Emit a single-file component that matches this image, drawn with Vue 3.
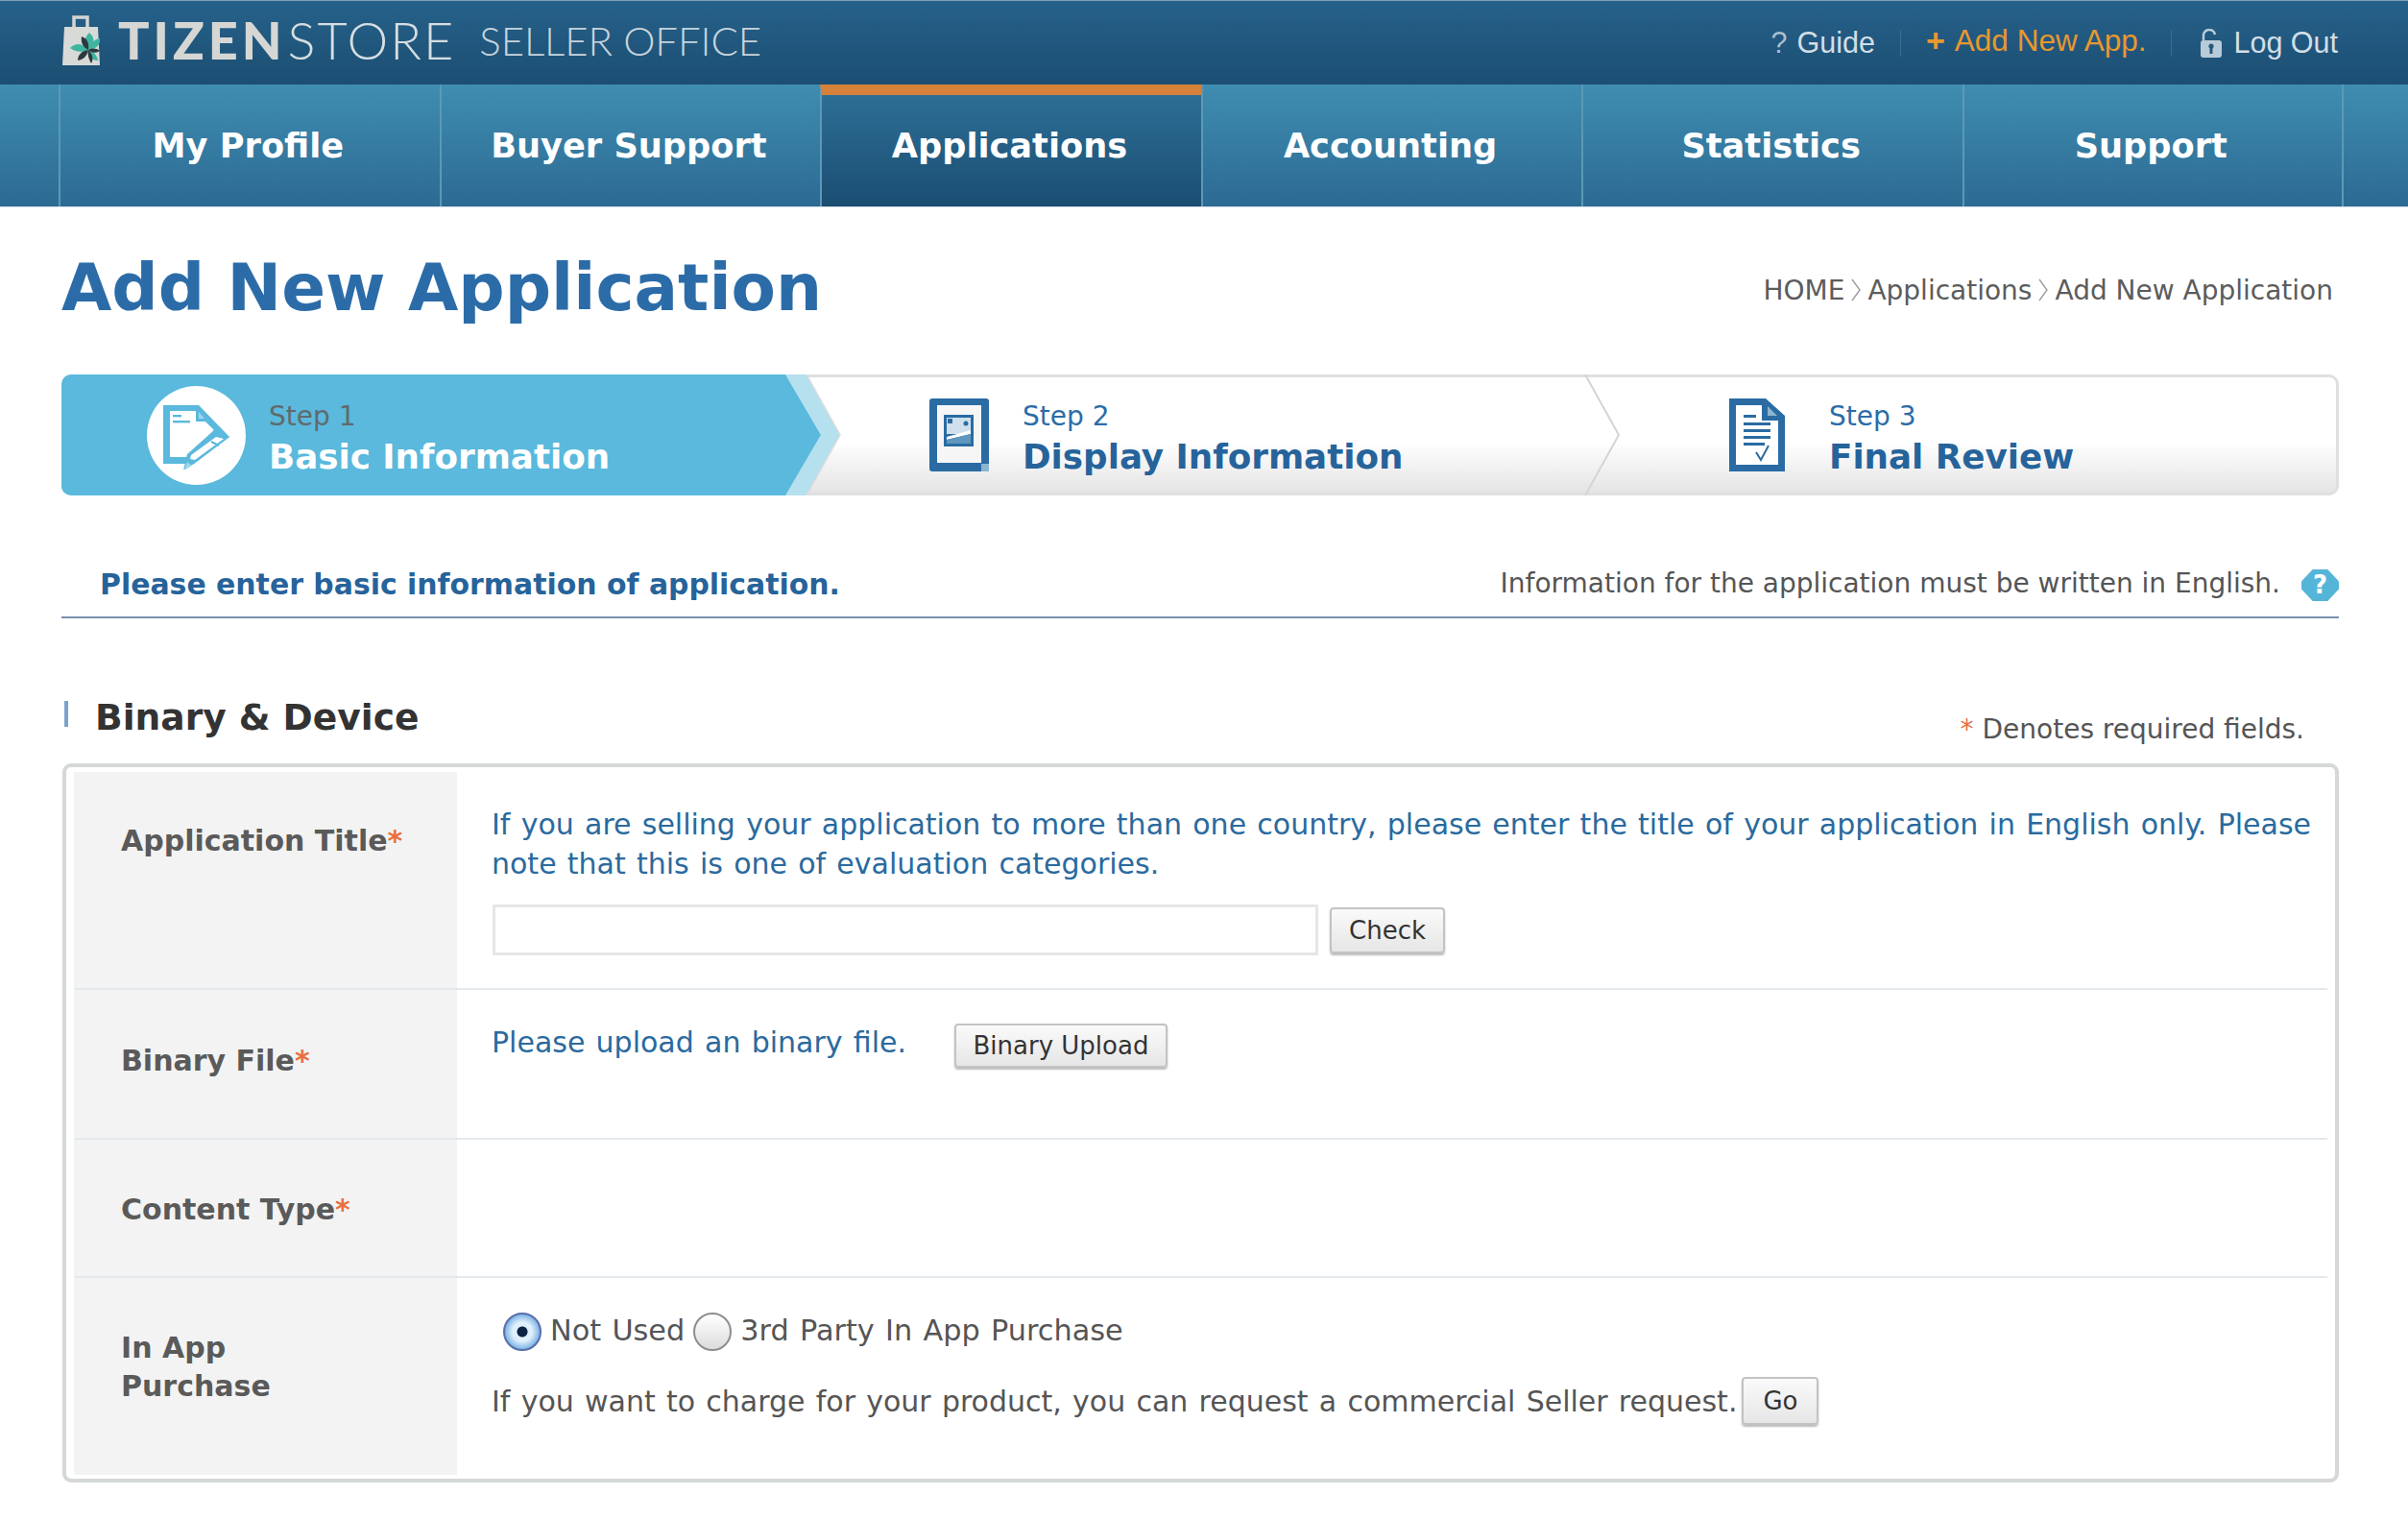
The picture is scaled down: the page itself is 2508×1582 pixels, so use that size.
<template>
  <div class="page">
    <header class="topbar">
      <div class="logo">
        <svg class="logo-icon" viewBox="0 0 40 52" width="40" height="52">
          <path d="M12 13V2h14v11" fill="none" stroke="#d3d5d3" stroke-width="3.5" />
          <path d="M2 12h35l2 40H0z" fill="#d8dad8" />
          <path d="M27 36c-5-6-5-12 1-18 6 5 6 12-1 18z" fill="#3fb5a0" />
          <path d="M27 36c-7 3-14 2-19-2 6-6 13-5 19 2z" fill="#3fb5a0" />
          <path d="M27 36c2-7 6-11 12-12 1 7-4 11-12 12z" fill="#3fb5a0" />
          <path d="M27 36c-6-3-8-8-7-14 6 2 8 7 7 14z" fill="#2c3a40" />
          <path d="M27 36c-1 6-5 10-11 11 0-6 4-10 11-11z" fill="#2c3a40" />
          <path d="M27 36c5 1 9 5 10 11-6 0-10-4-10-11z" fill="#3fb5a0" />
          <path d="M27 36c4-2 8-2 12 1-4 3-9 2-12-1z" fill="#2c3a40" />
          <path d="M27 36c-1 4 0 9 3 14 3-5 1-10-3-14z" fill="#2c3a40" />
        </svg>
        <span class="logo-tizen">TIZEN</span>
        <span class="logo-store">STORE</span>
        <span class="logo-office">SELLER OFFICE</span>
      </div>
      <div class="top-links">
        <a class="top-link"><span class="q">?</span> Guide</a>
        <i class="top-sep"></i>
        <a class="top-link add"><b>+</b> Add New App.</a>
        <i class="top-sep"></i>
        <a class="top-link">
          <svg viewBox="0 0 28 30" width="28" height="30">
            <path d="M7 13V8a6 6 0 0 1 12-2" fill="none" stroke="#b9cbd8" stroke-width="2.5" />
            <rect x="4" y="12" width="22" height="18" rx="3" fill="#b9cbd8" />
            <rect x="13.5" y="18" width="3" height="8" fill="#24597d" />
            <circle cx="15" cy="18" r="2.6" fill="#24597d" />
          </svg>
          Log Out
        </a>
      </div>
    </header>

    <nav class="nav">
      <a v-for="item in navItems" :key="item" class="nav-item" :class="{ active: item === 'Applications' }">{{ item }}</a>
    </nav>

    <main class="content">
      <div class="title-row">
        <h1>Add New Application</h1>
        <div class="crumbs">
          <span>HOME</span>
          <svg viewBox="0 0 10 24" width="10" height="24"><path d="M1 1l8 11-8 11" fill="none" stroke="#999" stroke-width="1.3" /></svg>
          <span>Applications</span>
          <svg viewBox="0 0 10 24" width="10" height="24"><path d="M1 1l8 11-8 11" fill="none" stroke="#999" stroke-width="1.3" /></svg>
          <span>Add New Application</span>
        </div>
      </div>

      <div class="steps">
        <svg class="steps-bg" viewBox="0 0 2372 126" width="2372" height="126">
          <polygon points="754,0 776,0 811,63 776,126 754,126 791,63" fill="#b5e0ee" />
          <path d="M776 0l35 63-35 63" fill="none" stroke="#ddd" stroke-width="1.5" />
          <path d="M1587 0l35 63-35 63" fill="none" stroke="#d4d4d4" stroke-width="2" />
        </svg>
        <div class="step current">
          <span class="step-circle">
            <svg viewBox="24 22 78 72" width="78" height="72">
              <path d="M28 27H65L97 60L60 88H28Z" fill="#5ab9dc" />
              <path d="M35 33H62V44H72L81 53L55 81H35Z" fill="#fff" />
              <rect x="38" y="37" width="9" height="2.4" fill="#5ab9dc" />
              <rect x="38" y="43" width="18" height="2.4" fill="#5ab9dc" />
              <path d="M65 34L71 41H65Z" fill="#9fd6ea" />
              <path d="M81 53L97 60L60 88L49 95L53 78Z" fill="#5ab9dc" />
              <path d="M83 60L91 62L61 84L56 83L57 79Z" fill="#fff" />
              <path d="M78 65L86 69" stroke="#5ab9dc" stroke-width="2" />
              <path d="M50 94L53 86L58 90Z" fill="#9fd6ea" />
            </svg>
          </span>
          <div class="step-text">
            <span class="step-no">Step 1</span>
            <strong>Basic Information</strong>
          </div>
        </div>
        <div class="step second">
          <svg viewBox="0 0 62 76" width="62" height="76">
            <rect width="62" height="76" rx="3" fill="#2a6ba3" />
            <rect x="8" y="7" width="46" height="60" fill="#f6f6f6" />
            <rect x="15" y="17" width="31" height="33" fill="#2a6ba3" />
            <rect x="18" y="20" width="25" height="17" fill="#cfe0ec" />
            <rect x="19" y="21" width="5" height="5" fill="#2a6ba3" />
            <circle cx="38" cy="26" r="2.5" fill="#2a6ba3" />
            <path d="M18 40L43 33V37L18 43Z" fill="#fff" />
            <path d="M18 43L43 37V47H18Z" fill="#5f97bd" />
            <rect x="54" y="68" width="8" height="8" fill="#8db5d0" />
          </svg>
          <div class="step-text">
            <span class="step-no">Step 2</span>
            <strong>Display Information</strong>
          </div>
        </div>
        <div class="step third">
          <svg viewBox="0 0 58 76" width="58" height="76">
            <path d="M0 0h38l20 18v58H0z" fill="#2a6ba3" />
            <path d="M7 7h27v16h17v46H7z" fill="#fff" />
            <path d="M40 8l10 10H40z" fill="#8db5d0" />
            <rect x="15" y="17" width="13" height="3" fill="#2a6ba3" />
            <rect x="15" y="25" width="28" height="3" fill="#2a6ba3" />
            <rect x="15" y="32" width="28" height="3" fill="#2a6ba3" />
            <rect x="15" y="39" width="28" height="3" fill="#2a6ba3" />
            <rect x="15" y="46" width="22" height="3" fill="#2a6ba3" />
            <path d="M28 56l5 8 8-15" fill="none" stroke="#2a6ba3" stroke-width="2" />
          </svg>
          <div class="step-text">
            <span class="step-no">Step 3</span>
            <strong>Final Review</strong>
          </div>
        </div>
      </div>

      <div class="intro">
        <strong>Please enter basic information of application.</strong>
        <div class="intro-note">
          <span>Information for the application must be written in English.</span>
          <span class="help">?</span>
        </div>
      </div>

      <div class="section-head">
        <h2>Binary &amp; Device</h2>
        <span class="denotes"><em>*</em> Denotes required fields.</span>
      </div>

      <div class="form-box">
        <div class="row row-title">
          <div class="label">Application Title<em>*</em></div>
          <div class="cell">
            <p class="blue">If you are selling your application to more than one country, please enter the title of your application in English only. Please note that this is one of evaluation categories.</p>
            <div class="input-line">
              <input type="text" class="text-input" />
              <button class="btn btn-check">Check</button>
            </div>
          </div>
        </div>
        <div class="row row-binary">
          <div class="label">Binary File<em>*</em></div>
          <div class="cell upload-line">
            <p class="blue">Please upload an binary file.</p>
            <button class="btn btn-upload">Binary Upload</button>
          </div>
        </div>
        <div class="row row-type">
          <div class="label">Content Type<em>*</em></div>
          <div class="cell"></div>
        </div>
        <div class="row row-purchase">
          <div class="label">In App<br />Purchase</div>
          <div class="cell">
            <div class="radios">
              <span class="radio checked"></span>
              <span>Not Used</span>
              <span class="radio"></span>
              <span>3rd Party In App Purchase</span>
            </div>
            <div class="request">
              <span>If you want to charge for your product, you can request a commercial Seller request.</span>
              <button class="btn btn-go">Go</button>
            </div>
          </div>
        </div>
      </div>
    </main>
  </div>
</template>

<script setup>
const navItems = ['My Profile', 'Buyer Support', 'Applications', 'Accounting', 'Statistics', 'Support']
</script>

<style>
html,
body {
  background: #fff;
}
</style>

<style scoped>
.page {
  width: 2508px;
  height: 1582px;
  overflow: hidden;
  font-family: "DejaVu Sans", Verdana, sans-serif;
  color: #555;
}

.topbar {
  height: 88px;
  box-sizing: border-box;
  padding: 0 73px 0 65px;
  display: flex;
  justify-content: space-between;
  align-items: center;
  background: linear-gradient(#26618a, #1c4e72);
  border-top: 1px solid #7f9fb5;
}

.logo {
  display: flex;
  align-items: center;
  font-family: Lato, "Open Sans", sans-serif;
  margin-top: -6px;
}

.logo-icon {
  margin-right: 18px;
}

.logo-tizen {
  font-size: 54px;
  font-weight: 900;
  color: #d6d7d4;
  letter-spacing: 4px;
  margin-right: 2px;
}

.logo-store {
  font-size: 54px;
  font-weight: 300;
  color: #d6dee2;
  letter-spacing: 2px;
  margin-right: 25px;
}

.logo-office {
  font-size: 42px;
  font-weight: 300;
  color: #c6d4dc;
  letter-spacing: -0.1px;
}

.top-links {
  display: flex;
  align-items: center;
  font-family: "Liberation Sans", Arial, sans-serif;
  font-size: 30.5px;
  color: #d3dee6;
}

.top-link {
  display: flex;
  align-items: center;
  gap: 10px;
}

.q {
  color: #a9c0cf;
}

.top-link.add {
  color: #e8982f;
  font-size: 31.5px;
  margin-top: -5px;
}

.top-link.add b {
  font-size: 34px;
}

.top-sep {
  width: 1px;
  height: 28px;
  margin: 0 26px;
  background: #3b6f90;
}

.nav {
  height: 127px;
  padding-left: 61px;
  display: flex;
  background: linear-gradient(#3f8db1, #2c6a93);
  border-bottom: 1px solid #d5e0e8;
}

.nav-item {
  width: 396.6px;
  box-sizing: border-box;
  padding-right: 4px;
  border-left: 2px solid #5b99b7;
  display: flex;
  justify-content: center;
  align-items: center;
  font-size: 35.2px;
  font-weight: 700;
  color: #fff;
}

.nav-item:last-child {
  border-right: 2px solid #5b99b7;
}

.nav-item.active {
  border-top: 11px solid #d5813a;
  padding-bottom: 11px;
  background: linear-gradient(#2d6e95, #1b4d72);
}

.content {
  padding: 0 72px 0 64px;
}

.title-row {
  height: 174px;
  box-sizing: border-box;
  padding-right: 6px;
  display: flex;
  justify-content: space-between;
  align-items: center;
  padding-bottom: 8px;
}

h1 {
  margin: 0;
  font-size: 67.6px;
  font-weight: 700;
  color: #2b6ca8;
}

.crumbs {
  display: flex;
  align-items: center;
  gap: 7px;
  font-size: 28px;
  color: #5c5c5c;
  padding-top: 6px;
}

.steps {
  position: relative;
  height: 126px;
  display: flex;
  box-sizing: border-box;
  border: 3px solid #dfdfdf;
  border-left: 0;
  border-radius: 10px;
  background: linear-gradient(#fff 55%, #e4e4e4);
}

.steps-bg {
  position: absolute;
  left: 0;
  top: -3px;
}

.step {
  position: relative;
  display: flex;
  align-items: center;
}

.step.current {
  width: 754px;
  margin-top: -3px;
  margin-bottom: -3px;
  padding-left: 89px;
  box-sizing: border-box;
  gap: 24px;
  background: #5ab9dc;
  border-radius: 10px 0 0 10px;
}

.step.current::after {
  content: "";
  position: absolute;
  left: 100%;
  top: 0;
  border-top: 63px solid transparent;
  border-bottom: 63px solid transparent;
  border-left: 37px solid #5ab9dc;
}

.step-circle {
  width: 103px;
  height: 103px;
  border-radius: 50%;
  background: #fff;
  display: flex;
  align-items: center;
  justify-content: center;
}

.step.second {
  margin-left: 150px;
  width: 833px;
  gap: 35px;
}

.step.third {
  gap: 46px;
}

.step-text {
  display: flex;
  flex-direction: column;
  gap: 5px;
  padding-top: 7px;
}

.step-no {
  font-size: 28px;
  color: #2b6ca8;
}

.step-text strong {
  font-size: 35.7px;
  color: #26639b;
  white-space: nowrap;
}

.current .step-no {
  color: #5f6a6e;
}

.current strong {
  color: #fff;
}

.intro {
  height: 128px;
  box-sizing: border-box;
  padding: 75px 0 0 40px;
  display: flex;
  justify-content: space-between;
  border-bottom: 2px solid #7a90ad;
}

.intro strong {
  font-size: 29.9px;
  color: #26639b;
}

.intro-note {
  display: flex;
  align-items: flex-start;
  gap: 22px;
  font-size: 28px;
  color: #555;
}

.help {
  width: 39px;
  height: 33px;
  margin-top: 2px;
  background: #55b5d9;
  clip-path: polygon(30% 0, 70% 0, 100% 38%, 100% 62%, 70% 100%, 30% 100%, 0 62%, 0 38%);
  color: #fff;
  font-size: 26px;
  font-weight: 700;
  line-height: 33px;
  text-align: center;
}

.section-head {
  height: 151px;
  box-sizing: border-box;
  padding: 80px 36px 0 35px;
  display: flex;
  justify-content: space-between;
  position: relative;
}

.section-head::before {
  content: "";
  position: absolute;
  left: 3px;
  top: 86px;
  width: 4px;
  height: 27px;
  background: #7ba3cc;
}

h2 {
  margin: 0;
  font-size: 37.6px;
  line-height: 46px;
  font-weight: 700;
  color: #333;
}

.denotes {
  font-size: 28px;
  padding-top: 19px;
}

.denotes em,
.label em {
  font-style: normal;
  color: #e8703f;
}

.form-box {
  box-sizing: border-box;
  height: 749px;
  margin-left: 1px;
  padding: 5px 8px 6px 8px;
  border: 4px solid #d5d8d8;
  border-radius: 9px;
}

.row {
  display: flex;
  border-bottom: 2px solid #e4e9ee;
}

.row:last-child {
  border-bottom: 0;
}

.row-title {
  height: 225px;
}

.row-binary {
  height: 154px;
}

.row-type {
  height: 142px;
}

.row-purchase {
  height: 205px;
}

.label {
  width: 399px;
  flex: none;
  box-sizing: border-box;
  padding: 52px 0 0 49px;
  background: #f3f3f3;
  font-size: 30px;
  line-height: 40px;
  font-weight: 700;
  color: #5a5a5a;
}

.row-binary .label {
  padding-top: 54px;
}

.row-type .label {
  padding-top: 53px;
}

.row-purchase .label {
  padding-top: 53px;
}

.cell {
  flex: 1;
  padding: 34px 8px 0 36px;
  font-size: 30px;
  line-height: 41px;
  word-spacing: 1.7px;
}

p {
  margin: 0;
}

.blue {
  color: #2a6a9e;
}

.input-line {
  display: flex;
  align-items: center;
  gap: 12px;
  margin-top: 22px;
}

.text-input {
  width: 860px;
  height: 53px;
  margin-left: 1px;
  box-sizing: border-box;
  border: 3px solid #e6e6e6;
  background: #fff;
  outline: none;
}

.btn {
  box-sizing: border-box;
  padding: 0;
  background: linear-gradient(#fafafa, #e6e6e6);
  border: 2px solid #c3c3c3;
  border-radius: 4px;
  box-shadow: 0 2px 2px #bbb;
  font-family: inherit;
  font-size: 26px;
  color: #333;
}

.btn-check {
  width: 120px;
  height: 48px;
}

.upload-line {
  display: flex;
  align-items: flex-start;
  gap: 50px;
  padding-top: 34px;
}

.btn-upload {
  width: 222px;
  height: 46px;
  margin-top: 1px;
}

.row-purchase .cell {
  padding-top: 30px;
}

.radios {
  display: flex;
  align-items: center;
  gap: 9px;
  padding: 2px 0 0 12px;
  font-size: 30.3px;
}

.radio {
  width: 40px;
  height: 40px;
  margin-top: 4px;
  box-sizing: border-box;
  border-radius: 50%;
  border: 2px solid #8e8e8e;
  background: linear-gradient(#fff, #dcdcdc);
}

.radio.checked {
  border-color: #5a6fa8;
  background: radial-gradient(circle, #0d2345 0 5px, #e0f0fb 6px 10px, #7fb4e6 18px);
}

.request {
  display: flex;
  align-items: center;
  margin-top: 27px;
}

.request span {
  white-space: nowrap;
}

.btn-go {
  width: 80px;
  height: 50px;
  margin-left: 5px;
}
</style>
